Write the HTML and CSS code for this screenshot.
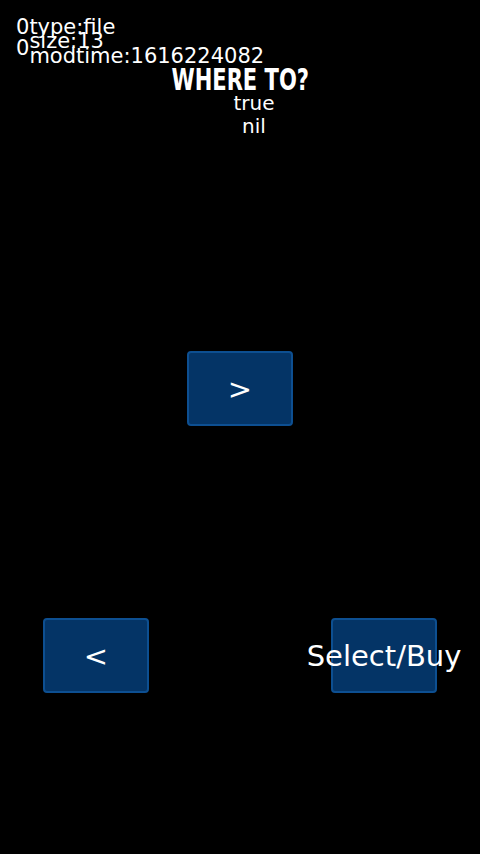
FILE: index.html
```html
<!DOCTYPE html>
<html>
<head>
<meta charset="utf-8">
<link rel="stylesheet" href="styles.css">
</head>
<body>
<div class="screen">
  <div class="info">
    <div class="zeros"><div>0</div><div>0</div></div>
    <div class="lines"><div>type:file</div><div>size:13</div><div>modtime:1616224082</div></div>
  </div>
  <div class="title"><span class="title-text">WHERE TO?</span></div>
  <div class="values"><div>true</div><div>nil</div></div>
  <div class="row-top">
    <div class="btn">&gt;</div>
  </div>
  <div class="row-bottom">
    <div class="btn">&lt;</div>
    <div class="btn">Select/Buy</div>
  </div>
</div>
</body>
</html>
```
FILE: styles.css
```css
html, body {
  margin: 0;
  padding: 0;
  background: #000;
}
body {
  color: #fff;
  font-family: "DejaVu Sans", sans-serif;
  font-size: 20px;
}
.screen {
  width: 480px;
  height: 854px;
  display: flex;
  flex-direction: column;
  overflow: hidden;
}
.info {
  display: flex;
  height: 66px;
  padding-left: 16px;
  box-sizing: border-box;
  font-size: 21px;
}
.zeros {
  padding-top: 16.5px;
  line-height: 21px;
}
.lines {
  padding-top: 19.5px;
  line-height: 14.7px;
  white-space: nowrap;
}
.title {
  margin-top: 2px;
  text-align: center;
  font-family: "DejaVu Sans Condensed", sans-serif;
  font-stretch: condensed;
  font-weight: bold;
  font-size: 30px;
  line-height: 24px;
  height: 24px;
}
.title-text {
  display: inline-block;
  transform: scaleX(0.78);
}
.values {
  padding-left: 28px;
  text-align: center;
  line-height: 23px;
}
.row-top {
  margin-top: 213px;
  display: flex;
  justify-content: center;
}
.row-bottom {
  margin-top: 192px;
  display: flex;
  justify-content: space-between;
  padding: 0 43px;
}
.btn {
  width: 106px;
  height: 75px;
  box-sizing: border-box;
  border: 2px solid #0d4f91;
  border-radius: 4px;
  background: #043466;
  display: flex;
  align-items: center;
  justify-content: center;
  font-size: 29px;
  white-space: nowrap;
}
```
